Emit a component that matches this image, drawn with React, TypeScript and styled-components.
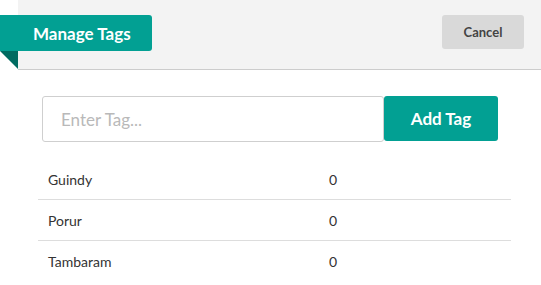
import React, { useState } from 'react';
import styled, { createGlobalStyle } from 'styled-components';

const GlobalStyle = createGlobalStyle`
  html, body {
    margin: 0;
    padding: 0;
    background: #ffffff;
    font-family: Lato, "Open Sans", sans-serif;
  }
`;

const TEAL = '#02a093';

const tags = [
  { name: 'Guindy', count: 0 },
  { name: 'Porur', count: 0 },
  { name: 'Tambaram', count: 0 },
];

export default function App() {
  const [value, setValue] = useState('');

  return (
    <>
      <GlobalStyle />
      <Wrapper>
        <Header>
          <Ribbon>Manage Tags</Ribbon>
          <CancelButton>Cancel</CancelButton>
        </Header>

        <Body>
          <TagForm onSubmit={(e) => e.preventDefault()}>
            <TagInput
              placeholder="Enter Tag..."
              value={value}
              onChange={(e) => setValue(e.target.value)}
            />
            <AddButton type="submit">Add Tag</AddButton>
          </TagForm>

          <TagTable>
            {tags.map((tag) => (
              <TagRow key={tag.name}>
                <TagCell>{tag.name}</TagCell>
                <TagCell>{tag.count}</TagCell>
              </TagRow>
            ))}
          </TagTable>
        </Body>
      </Wrapper>
    </>
  );
}

const Wrapper = styled.div`
  width: 541px;
  min-height: 285px;
`;

const Header = styled.div`
  margin-left: 18px;
  height: 70px;
  box-sizing: border-box;
  padding: 15px 17px 0 0;
  background: #f3f3f3;
  border-bottom: 1px solid #cccccc;
  display: flex;
  justify-content: space-between;
  align-items: flex-start;
`;

const Ribbon = styled.div`
  position: relative;
  margin-left: -18px;
  width: 152px;
  height: 36px;
  box-sizing: border-box;
  padding-left: 33px;
  display: flex;
  align-items: center;
  background: ${TEAL};
  color: #ffffff;
  font-size: 17px;
  font-weight: 700;
  border-radius: 0 3px 3px 0;

  /* folded corner under the ribbon */
  &::after {
    content: '';
    position: absolute;
    left: 0;
    top: 36px;
    width: 0;
    height: 0;
    border-top: 18px solid #006b61;
    border-left: 18px solid transparent;
  }
`;

const CancelButton = styled.button`
  width: 82px;
  height: 34px;
  border: none;
  border-radius: 3px;
  background: #d9d9d9;
  color: #444444;
  font-family: Lato, sans-serif;
  font-size: 13px;
  font-weight: 700;
  cursor: pointer;
`;

const Body = styled.div`
  padding-top: 26px;
`;

const TagForm = styled.form`
  display: flex;
  align-items: flex-start;
  margin: 0 0 0 42px;
`;

const TagInput = styled.input`
  width: 342px;
  height: 46px;
  box-sizing: border-box;
  border: 1px solid #cfcfcf;
  border-radius: 3px;
  padding: 0 18px;
  font-family: Lato, sans-serif;
  font-size: 17px;
  color: #333;
  outline: none;

  &::placeholder {
    color: #b9b9b9;
  }
`;

const AddButton = styled.button`
  width: 114px;
  height: 45px;
  border: none;
  border-radius: 3px;
  background: ${TEAL};
  color: #ffffff;
  font-family: Lato, sans-serif;
  font-size: 17px;
  font-weight: 700;
  cursor: pointer;
`;

const TagTable = styled.div`
  margin: 17px 0 0 38px;
  width: 473px;
`;

const TagRow = styled.div`
  display: grid;
  grid-template-columns: 281px 1fr;
  height: 41px;
  box-sizing: border-box;
  align-items: center;
  border-bottom: 1px solid #dddddd;

  &:last-child {
    border-bottom: none;
  }
`;

const TagCell = styled.div`
  padding-left: 10px;
  font-size: 14px;
  color: #333333;
`;
